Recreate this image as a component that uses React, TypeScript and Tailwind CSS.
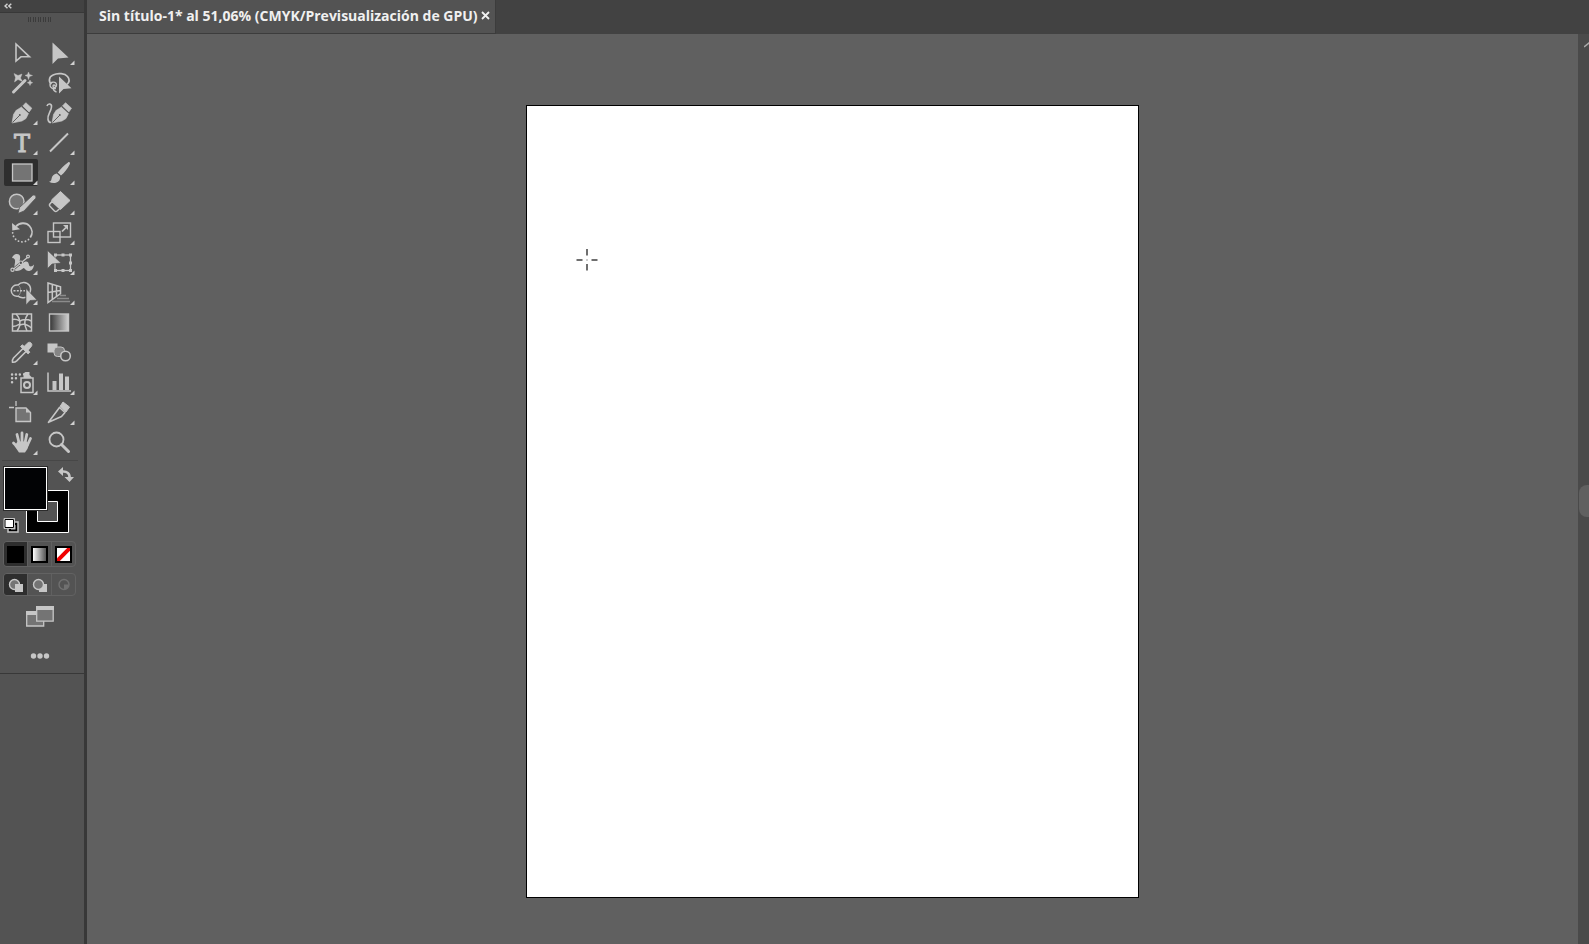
import React, { useState } from 'react';

type Tool = {
    name: string;
    icon: React.ReactNode;
    more?: boolean;
};

const LIGHT = "#c6c6c6";
const MID = "#747474";
const PANEL = "#535353";

const tools: Tool[] = [
    {
        name: "Selección directa",
        icon: <path d="M12 6v17l5-4.2h8.5z" fill="none" stroke={LIGHT} strokeWidth="1.6" />,
    },
    {
        name: "Selección",
        more: true,
        icon: <path d="M11.5 4.5v21.5l5.5-5.5 10.5-1z" fill={LIGHT} />,
    },
    {
        name: "Varita mágica",
        icon: (
            <>
                <path d="M9.5 24L21 12.5" stroke={LIGHT} strokeWidth="3" strokeLinecap="round" />
                <path d="M10 5.5l4 2 4-1.5-1.5 4 2 3.5-4.5-2-3.5 2.5 1-4.5zM24.5 4l1 2.5 3 1-3 1-1 3-1-3-2.5-1 2.5-1zM26 12l.8 1.8 1.9.9-1.9.9-.8 1.9-.8-1.9-1.9-.9 1.9-.9z" fill={LIGHT} stroke={LIGHT} strokeWidth=".4" />
            </>
        ),
    },
    {
        name: "Lazo",
        icon: (
            <>
                <path d="M10.5 16C7.5 14 7.5 9 12 7c5-2.5 12-1.5 14.5 1.5 2 2.3 2 5.5-.5 8" fill="none" stroke={LIGHT} strokeWidth="1.7" />
                <path d="M9 17c0-3.5 6-4 6.5-.5.3 3-3.5 4-3.5 1.5 0-1.5 2-1.5 2 0M9 17c0 3 3 4 6 3.5M12 20c.3 2 1.5 3.5 3.5 4" fill="none" stroke={LIGHT} strokeWidth="1.4" />
                <path d="M18 8.5v17l4.5-4.5 8-.8z" fill={LIGHT} />
            </>
        ),
    },
    {
        name: "Pluma",
        more: true,
        icon: (
            <>
                <path d="M8 25l1.5-8.5 2.5-4 5.5-3.5 7 6.5-2.5 5-4 2.5z" fill={LIGHT} strokeLinejoin="round" stroke={LIGHT} strokeWidth=".6" />
                <path d="M18.8 8l3-3.3 6 5.5-2.7 3.8z" fill={LIGHT} stroke={LIGHT} strokeWidth=".7" strokeLinejoin="round" />
                <path d="M18.2 8.7l6.7 6.2" stroke={PANEL} strokeWidth=".9" />
                <path d="M8.5 24.5l7-7" stroke={PANEL} strokeWidth=".9" />
                <circle cx="15.8" cy="17" r=".9" fill={PANEL} />
            </>
        ),
    },
    {
        name: "Curvatura",
        icon: (
            <>
                <path d="M6 8c1-3 5-2.5 4.5 1C10 14 6 17 7 21.5c.3 1.8 1.5 3 3 3" fill="none" stroke={LIGHT} strokeWidth="1.6" />
                <path d="M11 25l1.5-8.5 2.5-4 5.5-3.5 7 6.5-2.5 5-4 2.5z" fill={LIGHT} strokeLinejoin="round" stroke={LIGHT} strokeWidth=".6" />
                <path d="M21.5 8l3-3.3 6 5.5-2.7 3.8z" fill={LIGHT} stroke={LIGHT} strokeWidth=".7" strokeLinejoin="round" />
                <path d="M20.9 8.7l6.7 6.2" stroke={PANEL} strokeWidth=".9" />
                <path d="M11.5 24.5l7-7" stroke={PANEL} strokeWidth=".9" />
                <circle cx="18.8" cy="17" r=".9" fill={PANEL} />
            </>
        ),
    },
    {
        name: "Texto",
        more: true,
        icon: (
            <text x="18" y="24" textAnchor="middle" fill={LIGHT} stroke={LIGHT} strokeWidth="1" fontFamily="DejaVu Serif, serif" fontSize="24">
                T
            </text>
        ),
    },
    {
        name: "Segmento de línea",
        more: true,
        icon: <path d="M9 23.5L27 5.5" stroke={LIGHT} strokeWidth="1.9" />,
    },
    {
        name: "Rectángulo",
        more: true,
        icon: <rect x="8.5" y="6" width="19.5" height="17" fill={MID} stroke={LIGHT} strokeWidth="1.3" />,
    },
    {
        name: "Pincel",
        more: true,
        icon: (
            <>
                <path d="M28.5 4.2c.8.7.5 1.6 0 2.5-2 4-5 8-8.5 10.8l-3.3-3C19.5 11 23 7.5 27 4.5c.5-.5 1-.6 1.5-.3z" fill={LIGHT} />
                <path d="M15.8 15.5l3.2 3c.5 3-1 5.5-4 6.2-2.5.6-5 .3-7-1 2.5-.5 2.3-2 2.7-3.7.6-2.5 2.6-4.3 5.1-4.5z" fill={LIGHT} />
            </>
        ),
    },
    {
        name: "Shaper",
        more: true,
        icon: (
            <>
                <circle cx="12.7" cy="13.5" r="7.3" fill={MID} stroke={LIGHT} strokeWidth="1.5" />
                <path d="M14 25.5l1.5-6L28.5 7.5c2-1.5 4.5 1 3 3L20 23z" fill={LIGHT} stroke={PANEL} strokeWidth=".8" />
            </>
        ),
    },
    {
        name: "Borrador",
        more: true,
        icon: (
            <>
                <path d="M19.5 3.5l9.5 9-9.5 9-9-9.5z" fill={LIGHT} stroke={LIGHT} strokeLinejoin="round" />
                <path d="M11 13.5l-2.5 3c-.3.8 0 1.2.5 1.8l4.5 4.7c.8.7 1.7.7 2.5 0l2.7-2.5z" fill={PANEL} stroke={LIGHT} strokeWidth="1.5" />
            </>
        ),
    },
    {
        name: "Rotar",
        more: true,
        icon: (
            <>
                <path d="M12 8.5c3.5-4 10-4.5 13.5-.5 3 3.3 3.3 8 .8 11.5" fill="none" stroke={LIGHT} strokeWidth="1.8" />
                <path d="M8 5l.3 7.5 7.7-1.3z" fill={LIGHT} />
                <path d="M24.5 21.5A9.5 9.5 0 0 1 8.7 14" fill="none" stroke={LIGHT} strokeWidth="1.8" strokeLinecap="round" strokeDasharray="0.1 3.4" />
            </>
        ),
    },
    {
        name: "Escala",
        more: true,
        icon: (
            <g fill="none" stroke={LIGHT} strokeWidth="1.4">
                <rect x="12.5" y="5" width="17" height="14" />
                <rect x="7" y="13.5" width="12" height="11" />
                <path d="M21 13.5l4-4" strokeWidth="1.7" />
                <path d="M22 7h5v5z" fill={LIGHT} stroke="none" />
            </g>
        ),
    },
    {
        name: "Anchura",
        more: true,
        icon: (
            <>
                <path d="M8 10c1-3 3-4 5-4 3 0 3.5 2.5 3 5l-1.500 7c2.500-.5 4-4 7-4.500 3.500-.5 3 3 4 4.500 1 1 3 .5 4.500-1.500-.5 4.500-2.500 6.500-5.500 6.500s-3.500-3-5-3c-2 2-4.500 3-7 3-3.500 0-2-5-1.500-8.500.5-3-.5-4.500-3-4.500z" fill={LIGHT} />
                <path d="M9 21.5L24 9" stroke={PANEL} strokeWidth="2.4" />
                <path d="M9 21.5L24 9" stroke={LIGHT} strokeWidth="1.3" />
                <circle cx="8.5" cy="21.8" r="1.6" fill={PANEL} stroke={LIGHT} strokeWidth="1.2" />
                <circle cx="16.8" cy="14.8" r="1.8" fill={PANEL} stroke={LIGHT} strokeWidth="1.2" />
                <circle cx="24" cy="8.5" r="1.4" fill={PANEL} stroke={LIGHT} strokeWidth="1.2" />
            </>
        ),
    },
    {
        name: "Transformación libre",
        more: true,
        icon: (
            <>
                <rect x="14" y="7" width="15.5" height="15.5" fill="none" stroke={LIGHT} strokeWidth="1.3" />
                <path d="M13 21h3v3h-3zM20.5 21h3v3h-3zM28 21h3v3h-3zM28 13.5h3v3h-3zM28 5.5h3v3h-3zM20.5 5.5h3v3h-3zM13 5.5h3v3h-3z" fill={LIGHT} />
                <path d="M6.5 2.5v18l4.5-4.5 9-1z" fill={LIGHT} stroke={PANEL} strokeWidth=".6" />
            </>
        ),
    },
    {
        name: "Creador de formas",
        more: true,
        icon: (
            <>
                <path d="M14 7a5.7 5.7 0 1 0 0 11.2" fill="none" stroke={LIGHT} strokeWidth="1.5" />
                <path d="M14 7c3-3.5 9-3.5 11.5.5 1.5 2.5 1.3 5.5 0 8M14 18.2c2 1.5 5 2 7.5 1" fill="none" stroke={LIGHT} strokeWidth="1.5" />
                <path d="M9.5 12.7h11.5" stroke={LIGHT} strokeWidth="1.4" strokeDasharray="2 1.3" />
                <path d="M14 7c3.5 2.5 3.5 8.5 0 11" fill="none" stroke={LIGHT} strokeWidth=".5" />
                <path d="M22 10.5v16.5l4-4.5 7-.5z" fill={LIGHT} stroke={PANEL} strokeWidth=".6" />
            </>
        ),
    },
    {
        name: "Cuadrícula de perspectiva",
        more: true,
        icon: (
            <>
                <path d="M19 17.5h6M16 20.5h12M11 23.5h18" stroke="#8b8b8b" strokeWidth="1.6" />
                <path d="M7 5l12.5 3.7v7L7 24.5zM11.3 6.3v15M15.5 7.5V18M7 14.5l12.5-2" fill="none" stroke={LIGHT} strokeWidth="1.5" />
            </>
        ),
    },
    {
        name: "Malla",
        icon: (
            <g fill="none" stroke={LIGHT} strokeWidth="1.5">
                <rect x="8.5" y="6" width="19" height="17" />
                <path d="M12 6c5 5 5 12 1 17M24 6c-4 5-4 11-1 17M8.5 11.5c3.5-.5 5 0 7 1.5M15 13.5c4-2.5 8-2.5 12.5-.5M8.5 18.5c3 0 5-1 7-2.5M16 17c3-1.5 7-1 11.5 3" />
            </g>
        ),
    },
    {
        name: "Degradado",
        icon: (
            <>
                <defs>
                    <linearGradient id="toolGradient">
                        <stop offset="0" stopColor="#353535" />
                        <stop offset="1" stopColor="#d0d0d0" />
                    </linearGradient>
                </defs>
                <rect x="8.5" y="6" width="19" height="17" fill="url(#toolGradient)" stroke={LIGHT} strokeWidth="1.4" />
            </>
        ),
    },
    {
        name: "Cuentagotas",
        more: true,
        icon: (
            <>
                <path d="M19 10.5L9.5 20c-1 1.2-1.2 3.3-1 4.2 1.5.2 3-.3 4.2-1.4l9.3-9.3" fill="none" stroke={LIGHT} strokeWidth="1.6" />
                <path d="M16.5 8.5l1.7-1.7 2 1.5L24 4.7c2-1.5 5 1 3.5 3.5l-3.3 4 1.6 2-1.7 1.7z" fill={LIGHT} stroke={LIGHT} strokeWidth=".9" />
            </>
        ),
    },
    {
        name: "Fusión",
        icon: (
            <>
                <rect x="6.5" y="5.5" width="10" height="9" fill={LIGHT} />
                <rect x="13" y="9" width="10.5" height="9.5" rx="3.5" fill="#858585" stroke={LIGHT} />
                <circle cx="24.5" cy="18" r="4.8" fill={PANEL} stroke={LIGHT} strokeWidth="1.6" />
            </>
        ),
    },
    {
        name: "Rociar símbolos",
        more: true,
        icon: (
            <>
                <path d="M8 6.5h8.5M8 10.3h5M8 14.2h1" stroke={LIGHT} strokeWidth="2.4" strokeDasharray="0.1 3.8" strokeLinecap="round" />
                <rect x="17" y="10" width="12" height="14.5" fill="none" stroke={LIGHT} strokeWidth="1.5" />
                <path d="M20 5l1.5-1h4v3l2 2v1h-8V7.5l-.5-.5v-1.5z" fill={LIGHT} />
                <circle cx="23" cy="17" r="3" fill="none" stroke={LIGHT} strokeWidth="2" />
            </>
        ),
    },
    {
        name: "Gráfica de columnas",
        more: true,
        icon: (
            <>
                <path d="M7 4.5V23h23" fill="none" stroke={LIGHT} strokeWidth="1.5" />
                <path d="M11.5 13h4v9h-4zM18 5.5h4V22h-4zM24 8.5h4V22h-4z" fill={LIGHT} />
            </>
        ),
    },
    {
        name: "Mesa de trabajo",
        icon: (
            <>
                <path d="M12 10h10l4.5 4.5v9H12z" fill={MID} stroke={LIGHT} strokeWidth="1.4" />
                <path d="M22 10l4.5 4.5H22z" fill={LIGHT} />
                <path d="M12 3v5M5 9.5h5" stroke={LIGHT} strokeWidth="1.3" />
            </>
        ),
    },
    {
        name: "Sector",
        more: true,
        icon: (
            <>
                <path d="M7.5 24.3L18.5 9.5l5.5 5-3.5 4z" fill="none" stroke={LIGHT} strokeWidth="1.6" strokeLinejoin="round" />
                <path d="M19 8.5l3-4.5 6.5 5-3.5 5z" fill={LIGHT} stroke={LIGHT} />
            </>
        ),
    },
    {
        name: "Mano",
        more: true,
        icon: (
            <>
                <path d="M13 6.5l2 8M18 5v9M22.8 6.5L21 15M26.5 10.5L23.5 17M9.5 15l5 5" stroke={LIGHT} strokeWidth="2.8" strokeLinecap="round" />
                <path d="M13.5 13.5h9.5l1.7 2.5c-.2 3.5-1.7 6-3.7 8.5h-6l-4.5-6.5z" fill={LIGHT} />
            </>
        ),
    },
    {
        name: "Zoom",
        icon: (
            <>
                <circle cx="15.5" cy="11.5" r="7" fill="none" stroke={LIGHT} strokeWidth="1.8" />
                <path d="M20.5 16.5l7 7" stroke={LIGHT} strokeWidth="3" strokeLinecap="round" />
            </>
        ),
    },
];

const colorModes = [
    { name: "Color", swatch: "bg-black" },
    { name: "Degradado de relleno", swatch: "bg-linear-to-r from-white to-[#555555]" },
    { name: "Ninguno", swatch: "bg-white" },
];

const drawModes = ["Dibujar normal", "Dibujar detrás", "Dibujar en el interior"];

function DrawIcon({ index }: { index: number }) {
    const line = index === 2 ? "#707070" : LIGHT;
    return (
        <svg width="16" height="16" viewBox="0 0 16 16">
            {index === 1 && <path d="M7 7h8v8H7z" fill={LIGHT} />}
            <circle cx={index === 2 ? 8 : 6.5} cy="7.5" r="5" fill={index === 2 ? "none" : MID} stroke={line} strokeWidth="1.4" />
            {index === 0 && <path d="M7 7h8v8H7z" fill={LIGHT} />}
            {index === 2 && <path d="M8 7.5h5l-1.5 4L8 12.5z" fill={line} />}
        </svg>
    );
}

function ToolPanel() {
    const [activeTool, setActiveTool] = useState("Rectángulo");
    const [colorMode, setColorMode] = useState(0);
    const [drawMode, setDrawMode] = useState(0);

    return (
        <aside className="w-[87px] shrink-0 flex flex-col bg-[#535353] border-r-3 border-[#383838]">
            <button aria-label="Contraer panel" className="h-3 w-full shrink-0 bg-[#424242] px-1 flex items-center">
                <svg width="8" height="6" viewBox="0 0 8 6" fill="none" stroke="#d0d0d0" strokeWidth="1.5">
                    <path d="M3.5 .7L1 3l2.5 2.3M7.3 .7L4.8 3l2.5 2.3" />
                </svg>
            </button>

            <div className="border-y border-[#383838] pb-3.5">
                {/* Grip */}
                <div className="h-[25px] pt-1 pl-7">
                    <svg width="24" height="5" viewBox="0 0 24 5">
                        <path d="M.5 0v5M2.5 0v5M5.5 0v5M7.5 0v5M10.5 0v5M12.5 0v5M15.5 0v5M17.5 0v5M20.5 0v5M22.5 0v5" stroke="#3b3b3b" strokeWidth="1" />
                    </svg>
                </div>

                {/* Tools */}
                <div className="grid grid-cols-[37px_37px] pl-1">
                    {tools.map((tool) => (
                        <button
                            key={tool.name}
                            aria-label={tool.name}
                            onClick={() => setActiveTool(tool.name)}
                            className="w-[37px] h-[30px]"
                        >
                            <svg width="37" height="30" viewBox="0 0 37 30">
                                {activeTool === tool.name && <rect x="0" y="1" width="34" height="27" rx="2" fill="#2e2e2e" />}
                                {tool.icon}
                                {tool.more && <path d="M33.5 22.5v4.5H29z" fill="#d0d0d0" />}
                            </svg>
                        </button>
                    ))}
                </div>

                <hr className="mt-0.5 mx-0.5 mr-1.5 border-[#474747]" />

                {/* Fill and stroke */}
                <svg className="mt-1 ml-[3px]" width="72" height="70" viewBox="0 0 72 70" role="img" aria-label="Relleno y trazo">
                    <path d="M23.5 25.5h42v42h-42z" fill="#000" stroke="#fff" />
                    <path d="M34.5 36.5h20v20h-20z" fill={PANEL} stroke="#fff" />
                    <rect x="0" y="1" width="45" height="45" fill="#2c2c2c" />
                    <rect x="1.5" y="2.5" width="42" height="42" fill="#020305" stroke="#fff" />
                    <path d="M59 6.5c5-.5 8 2 7.5 6.5" fill="none" stroke={LIGHT} strokeWidth="2.6" />
                    <path d="M60 2v9L55 6.5zM61.5 12h9.5L66.5 17z" fill={LIGHT} />
                    <path d="M5 57h10v10H5z" fill="#000" stroke={LIGHT} strokeWidth="1.5" />
                    <path d="M8 60h4.5v4.5H8z" fill={LIGHT} />
                    <path d="M1 53.5h10.5v10H1z" fill="#fff" stroke={LIGHT} />
                    <path d="M2 54.5h8.5v8H2z" fill="#fff" stroke="#000" />
                </svg>

                <div className="mt-1.5 ml-[3px] w-[73px] h-[26px] flex rounded border border-[#626262] overflow-hidden">
                    {colorModes.map((mode, index) => (
                        <button
                            key={mode.name}
                            aria-label={mode.name}
                            onClick={() => setColorMode(index)}
                            className={`flex-1 flex items-center justify-center ${index < 2 ? "border-r border-[#606060]" : ""} ${colorMode === index ? "bg-[#2e2e2e]" : ""}`}
                        >
                            <span className={`block size-[17px] border-2 border-black ${mode.swatch}`}>
                                {index === 2 && (
                                    <svg width="13" height="13" viewBox="0 0 13 13">
                                        <path d="M0 13L13 0" stroke="#f00000" strokeWidth="4" />
                                    </svg>
                                )}
                            </span>
                        </button>
                    ))}
                </div>

                <div className="mt-1.5 ml-[3px] w-[73px] h-[23px] flex rounded border border-[#626262] overflow-hidden">
                    {drawModes.map((name, index) => (
                        <button
                            key={name}
                            aria-label={name}
                            onClick={() => setDrawMode(index)}
                            className={`flex-1 flex items-center justify-center ${index < 2 ? "border-r border-[#606060]" : ""} ${drawMode === index ? "bg-[#2e2e2e]" : ""}`}
                        >
                            <DrawIcon index={index} />
                        </button>
                    ))}
                </div>

                <button aria-label="Modo de pantalla" className="block mt-2.5 ml-[26px]">
                    <svg width="28" height="21" viewBox="0 0 28 21">
                        <path d="M.7 6h17v14H.7z" fill={MID} stroke={LIGHT} strokeWidth="1.3" />
                        <path d="M0 5h18v4H0z" fill={LIGHT} />
                        <path d="M10.7 .7h16.5v14.5H10.7z" fill={MID} stroke={LIGHT} strokeWidth="1.3" />
                        <path d="M10 0h18v4H10z" fill={LIGHT} />
                    </svg>
                </button>

                <button aria-label="Editar barra de herramientas" className="block mt-[26px] ml-[30px]">
                    <svg width="20" height="6" viewBox="0 0 20 6" fill={LIGHT}>
                        <circle cx="3.5" cy="3" r="2.7" />
                        <circle cx="10" cy="3" r="2.7" />
                        <circle cx="16.5" cy="3" r="2.7" />
                    </svg>
                </button>
            </div>
        </aside>
    );
}

function App() {
    return (
        <div className="min-h-screen flex bg-[#606060] font-['Open_Sans','Noto_Sans',sans-serif]">
            <ToolPanel />

            <main className="flex-1 min-w-0 flex flex-col">
                {/* Document tabs */}
                <div className="h-[34px] shrink-0 flex bg-[#424242]">
                    <div className="flex items-center gap-0.5 pl-3 pr-1 pb-0.5 bg-[#535353] border-b border-r border-[#3c3c3c]">
                        <span className="text-sm leading-5 font-bold text-[#f0f0f0] whitespace-nowrap">
                            Sin título-1* al 51,06% (CMYK/Previsualización de GPU)
                        </span>
                        <button aria-label="Cerrar documento" className="p-px">
                            <svg width="9" height="9" viewBox="0 0 9 9" stroke="#f0f0f0" strokeWidth="1.8">
                                <path d="M1 1l7 7M8 1L1 8" />
                            </svg>
                        </button>
                    </div>
                </div>

                <div className="flex-1 flex">
                    {/* Canvas */}
                    <div className="flex-1 flex justify-center items-start pt-[71px]">
                        <div className="relative w-[613px] h-[793px] bg-white border border-black">
                            <svg className="absolute left-[49px] top-[143px]" width="22" height="22" viewBox="0 0 22 22" stroke="#404040">
                                <path d="M11 0v6.5M11 15v6.5M.5 11h6M15.5 11h6" strokeWidth="1.5" />
                                <path d="M10.5 11h1" />
                            </svg>
                        </div>
                    </div>

                    {/* Vertical scrollbar */}
                    <div className="w-[11px] shrink-0 bg-[#4a4a4a] overflow-hidden">
                        <svg className="mt-2 ml-1.5" width="12" height="6" viewBox="0 0 12 6" fill="none" stroke="#a8a8a8" strokeWidth="1.6">
                            <path d="M0 5l5-4 5 4" />
                        </svg>
                        <div className="mt-[437px] ml-px w-5 h-8 rounded-lg bg-[#606060]"></div>
                    </div>
                </div>
            </main>
        </div>
    );
}

export default App;
